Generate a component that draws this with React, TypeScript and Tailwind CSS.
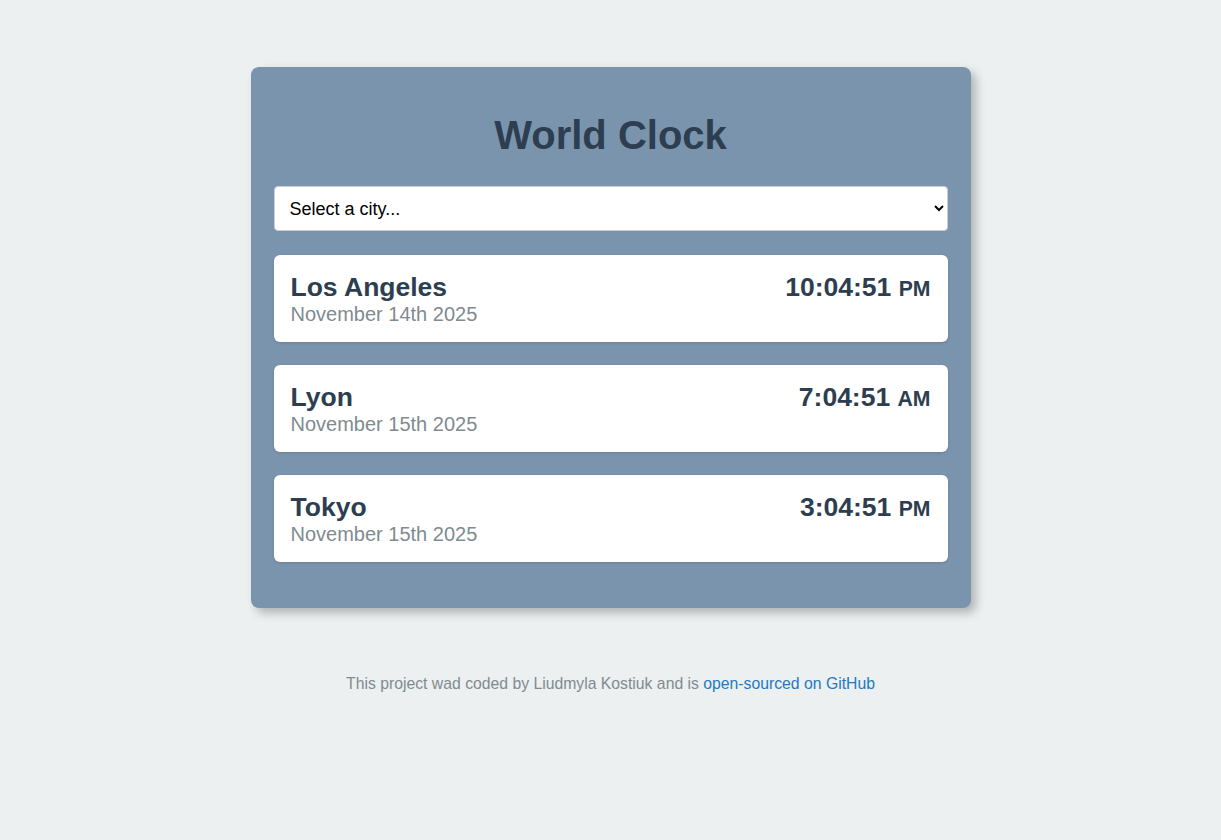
import React, { useState } from 'react';

interface City {
  name: string;
  date: string;
  time: string;
  period: string;
}

const cities: City[] = [
  { name: 'Los Angeles', date: 'November 14th 2025', time: '10:04:51', period: 'PM' },
  { name: 'Lyon', date: 'November 15th 2025', time: '7:04:51', period: 'AM' },
  { name: 'Tokyo', date: 'November 15th 2025', time: '3:04:51', period: 'PM' },
];

function CityCard({ city }: { city: City }) {
  return (
    <div className="flex justify-between items-start bg-white rounded-[6px] px-[17px] pt-[17px] pb-[16px] shadow-[0_1px_3px_rgba(0,0,0,0.15)]">
      <div>
        <div className="text-[26.5px] font-bold text-[#2c3e50]">{city.name}</div>
        <div className="text-[20px] text-[#808b8f]">{city.date}</div>
      </div>
      <div className="text-[26.5px] font-bold text-[#2c3e50]">
        {city.time} <small className="text-[0.8em]">{city.period}</small>
      </div>
    </div>
  );
}

export default function App() {
  const [selected, setSelected] = useState('');

  return (
    <div className="min-h-[840px] bg-[#ecf0f1] pt-[67px] leading-[normal] font-['Liberation_Sans',Arial,sans-serif]">
      <div className="w-[720px] mx-auto bg-[#7b94ae] rounded-[8px] px-[23px] pt-[19px] pb-[46px] shadow-[5px_5px_10px_rgba(0,0,0,0.25)]">
        <h1 className="text-center text-[40px] font-bold text-[#2c3e50] mt-[27px] mb-[28px]">World Clock</h1>
        <select
          value={selected}
          onChange={(e) => setSelected(e.target.value)}
          className="w-full h-[45px] bg-white border border-[#c9ced3] rounded-[4px] pl-[11px] pr-[8px] text-[18px] text-black"
        >
          <option value="">Select a city...</option>
          <option value="paris">Paris</option>
          <option value="sydney">Sydney</option>
          <option value="new-york">New York</option>
        </select>
        <div className="flex flex-col gap-[23px] mt-[24px]">
          {cities.map((city) => (
            <CityCard key={city.name} city={city} />
          ))}
        </div>
      </div>
      <p className="mt-[67px] text-center text-[15.75px] text-[#808b8f]">
        This project wad coded by Liudmyla Kostiuk and is{' '}
        <a href="#" className="text-[#2479c1]">open-sourced on GitHub</a>
      </p>
    </div>
  );
}
